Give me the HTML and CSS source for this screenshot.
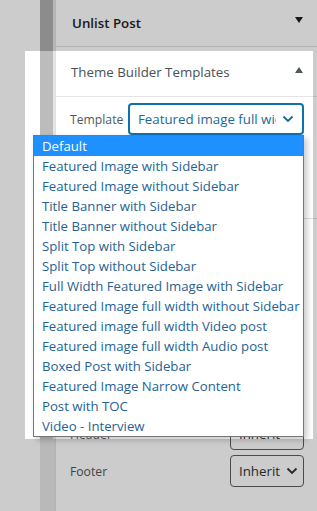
FILE: index.html
```html
<!DOCTYPE html>
<html lang="en">
<head>
    <meta charset="UTF-8">
    <meta name="viewport" content="width=device-width, initial-scale=1.0">
    <title>Theme Builder Templates</title>
    <link rel="stylesheet" href="styles.css">
</head>
<body>
    <div class="editor">
        <div class="gutter"></div>
        <div class="scroll-strip"></div>
        <div class="strip-edge"></div>

        <div class="sidebar">
            <div class="panel">
                <div class="panel-head closed">
                    <span>Unlist Post</span>
                    <span class="caret down"></span>
                </div>
            </div>

            <div class="panel">
                <div class="panel-head open">
                    <span>Theme Builder Templates</span>
                    <span class="caret up"></span>
                </div>
                <div class="panel-body">
                    <div class="field-row">
                        <label>Template</label>
                        <div class="select focused wide">
                            <span class="select-value">Featured image full width Video post</span>
                            <svg class="chev" width="12" height="8" viewBox="0 0 12 8"><polyline points="1.5,1.5 6,6 10.5,1.5" fill="none" stroke="currentColor" stroke-width="1.8"/></svg>
                        </div>
                    </div>
                </div>
            </div>

            <div class="panel layout-panel">
                <div class="field-row">
                    <label>Header</label>
                    <div class="select small">
                        <span class="select-value">Inherit</span>
                        <svg class="chev" width="12" height="8" viewBox="0 0 12 8"><polyline points="1.5,1.5 6,6 10.5,1.5" fill="none" stroke="currentColor" stroke-width="1.8"/></svg>
                    </div>
                </div>
                <div class="field-row">
                    <label>Footer</label>
                    <div class="select small">
                        <span class="select-value">Inherit</span>
                        <svg class="chev" width="12" height="8" viewBox="0 0 12 8"><polyline points="1.5,1.5 6,6 10.5,1.5" fill="none" stroke="currentColor" stroke-width="1.8"/></svg>
                    </div>
                </div>
            </div>
        </div>
    </div>

    <!-- tour spotlight, dims everything outside it -->
    <div class="spotlight"></div>

    <ul class="options">
        <li class="active">Default</li>
        <li>Featured Image with Sidebar</li>
        <li>Featured Image without Sidebar</li>
        <li>Title Banner with Sidebar</li>
        <li>Title Banner without Sidebar</li>
        <li>Split Top with Sidebar</li>
        <li>Split Top without Sidebar</li>
        <li>Full Width Featured Image with Sidebar</li>
        <li>Featured Image full width without Sidebar</li>
        <li>Featured image full width Video post</li>
        <li>Featured image full width Audio post</li>
        <li>Boxed Post with Sidebar</li>
        <li>Featured Image Narrow Content</li>
        <li>Post with TOC</li>
        <li>Video - Interview</li>
    </ul>
</body>
</html>
```

FILE: styles.css
```css
body {
    margin: 0;
    padding: 0;
    background-color: #fff;
    font-family: "Open Sans", "Noto Sans", sans-serif;
    overflow: hidden;
}
.editor {
    display: flex;
    height: 511px;
}
.gutter {
    width: 40px;
    background-color: #fff;
}
.scroll-strip {
    width: 13px;
    background: linear-gradient(#afafaf 0, #afafaf 51px, #bcbcbc 51px, #bcbcbc 439px, #e8e8e8 439px);
}
.strip-edge {
    width: 2px;
    background-color: #e6e6e6;
}
.sidebar {
    flex: 1;
    border-left: 1px solid #e0e0e0;
    background-color: #fff;
}
.panel {
    border-bottom: 1px solid #e0e0e0;
}
.panel-head {
    display: flex;
    align-items: center;
    justify-content: space-between;
    padding: 0 14px 0 15px;
}
.panel-head.closed {
    height: 46px;
    font-size: 13.3px;
    font-weight: 600;
    color: #1e1e1e;
    padding-left: 16px;
}
.panel-head.open {
    height: 49px;
    font-size: 13.3px;
    font-weight: 500;
    color: #4a5057;
    border-bottom: 1px solid #e4e4e4;
}
.caret {
    width: 0;
    height: 0;
    border-left: 4px solid transparent;
    border-right: 4px solid transparent;
}
.caret.down {
    border-top: 6px solid #1e1e1e;
    margin-top: -6px;
}
.caret.up {
    border-bottom: 6px solid #50575e;
    margin-top: -4px;
}
.panel-body {
    padding: 6px 13px 83px 14px;
}
.field-row {
    display: flex;
    align-items: center;
    justify-content: space-between;
}
.field-row label {
    font-size: 12.2px;
    color: #50575e;
}
.select {
    display: flex;
    align-items: center;
    justify-content: space-between;
    box-sizing: border-box;
    height: 32px;
    border-radius: 4px;
    background-color: #fff;
}
.select.focused {
    border: 2px solid #0d72b0;
    color: #18699b;
    padding: 0 8px 0 8px;
}
.select.wide {
    width: 176px;
}
.select-value {
    white-space: nowrap;
    overflow: hidden;
    flex: 1;
    font-size: 13.3px;
}
.select.wide .select-value {
    max-width: 141px;
}
.chev {
    flex: none;
    margin-left: 6px;
}
.select.small {
    width: 74px;
    height: 32px;
    border: 1px solid #5b5f63;
    color: #2c3338;
    padding: 0 7px 0 8px;
}
.select.small .select-value {
    overflow: visible;
}
.layout-panel {
    border-bottom: none;
    padding: 199px 13px 0 14px;
}
.layout-panel .field-row {
    margin-bottom: 5px;
}
.spotlight {
    position: absolute;
    left: 25px;
    top: 51px;
    width: 288px;
    height: 388px;
    box-shadow: 0 0 0 1200px rgba(0, 0, 0, 0.2);
    pointer-events: none;
}
.options {
    position: absolute;
    left: 33px;
    top: 135px;
    width: 269px;
    margin: 0;
    padding: 0;
    list-style: none;
    background-color: #fff;
    border: 1px solid #767676;
    box-shadow: 3px 3px 6px rgba(0, 0, 0, 0.22);
}
.options li {
    height: 20px;
    line-height: 20px;
    padding-left: 8px;
    font-size: 13.2px;
    color: #1f6293;
    white-space: nowrap;
}
.options li.active {
    background-color: #1e90ff;
    color: #fff;
}
```
